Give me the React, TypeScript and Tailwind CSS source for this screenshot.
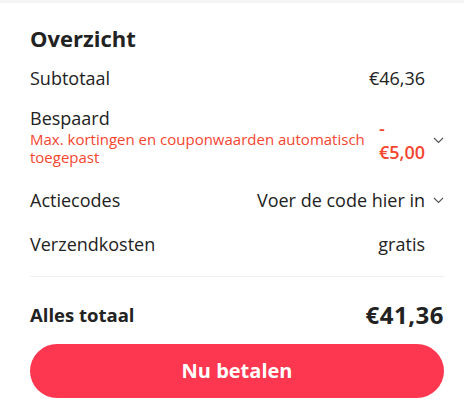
import React from 'react';

const Chevron = () => (
  <svg width="11" height="7" viewBox="0 0 11 7" fill="none" className="block">
    <path d="M1 1l4.5 4.5L10 1" stroke="#555" strokeWidth="1.1" />
  </svg>
);

interface RowProps {
  label: React.ReactNode;
  value: React.ReactNode;
  chevron?: boolean;
  className?: string;
}

const Row: React.FC<RowProps> = ({ label, value, chevron, className }) => (
  <div className={`flex items-center justify-between ${className ?? ''}`}>
    <div className="text-[18px] leading-6 text-[#222]">{label}</div>
    <div className="flex items-center">
      <div className="text-[18px] leading-6 text-[#222]">{value}</div>
      <div className="w-[19px] flex justify-end">{chevron && <Chevron />}</div>
    </div>
  </div>
);

export default function App() {
  return (
    <div className="w-[464px] h-[410px] bg-white overflow-hidden" style={{ fontFamily: '"Open Sans", sans-serif' }}>
      <div className="h-[3px] bg-[#f4f4f4]" />
      <div className="px-[30px] pr-[20px]">
        <h2 className="mt-[21px] text-[22px] leading-7 font-bold text-[#222]">Overzicht</h2>

        <Row className="mt-[14px]" label="Subtotaal" value="€46,36" />

        <div className="mt-[16px] flex justify-between">
          <div className="w-[340px]">
            <div className="text-[18px] leading-6 text-[#222]">Bespaard</div>
            <div className="text-[15px] leading-[18px] text-[#f5452f]">
              Max. kortingen en couponwaarden automatisch toegepast
            </div>
          </div>
          <div className="flex items-start pt-[10px]">
            <div className="flex flex-col items-start text-[18px] leading-6 font-semibold text-[#f5452f]">
              <span>-</span>
              <span>€5,00</span>
            </div>
            <div className="w-[19px] flex justify-end pt-[21px]">
              <Chevron />
            </div>
          </div>
        </div>

        <Row className="mt-[22px]" label="Actiecodes" value="Voer de code hier in" chevron />
        <Row className="mt-[20px]" label="Verzendkosten" value="gratis" />

        <div className="mt-[20px] h-px bg-[#efefef]" />

        <div className="mt-[22px] flex items-center justify-between">
          <span className="text-[18.5px] leading-6 font-bold text-[#222]">Alles totaal</span>
          <span className="text-[24px] leading-8 font-bold text-[#222] tracking-[0.5px]">€41,36</span>
        </div>

        <button className="mt-[13px] w-full h-[54px] rounded-full bg-[#fe3750] text-white text-[20px] font-bold">
          Nu betalen
        </button>
      </div>
    </div>
  );
}
